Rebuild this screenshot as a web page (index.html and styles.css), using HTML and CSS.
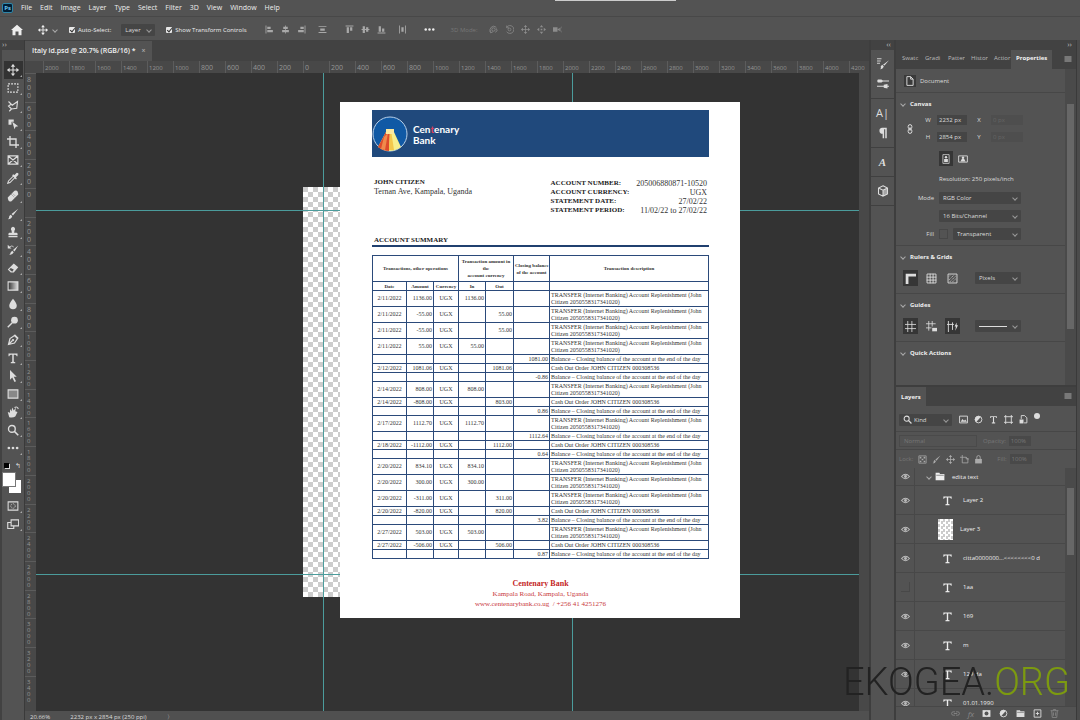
FILE: index.html
```html
<!DOCTYPE html>
<html lang="en">
<head>
  <meta charset="UTF-8" />
  <meta name="viewport" content="width=device-width, initial-scale=1.0"/>
  <title>Italy id.psd</title>
  <link rel="stylesheet" href="styles.css">
</head>

<body>
  <!-- Shared icons -->
  <svg class="sprite" xmlns="http://www.w3.org/2000/svg">
    <symbol id="i-move" viewBox="0 0 16 16"><path d="M8 1v14M1 8h14" fill="none" stroke="currentColor" stroke-width="1.4"/><path d="M8 0l3 3.5H5zM8 16l3-3.5H5zM0 8l3.5-3v6zM16 8l-3.5-3v6z" fill="currentColor"/></symbol>
    <symbol id="i-marquee" viewBox="0 0 16 16"><path d="M1.500 2.500h13v11h-13z" fill="none" stroke="currentColor" stroke-width="1.500" stroke-dasharray="2.500 1.500"/></symbol>
    <symbol id="i-lasso" viewBox="0 0 16 16"><path d="M2 2l5 5 7-5-1 9-7 1-4-4 3-2M6 12l-3 3" fill="none" stroke="currentColor" stroke-width="1.500"/></symbol>
    <symbol id="i-object" viewBox="0 0 16 16"><path d="M2 2h7v3H6v4H2z" fill="currentColor"/><path d="M7 5l8 6-3.500.5L10 15z" fill="currentColor"/></symbol>
    <symbol id="i-crop" viewBox="0 0 16 16"><path d="M4 0v12h12M0 4h12v12" fill="none" stroke="currentColor" stroke-width="1.800"/></symbol>
    <symbol id="i-frame" viewBox="0 0 16 16"><path d="M1.500 2.500h13v11h-13zM2 3l12 10M14 3L2 13" fill="none" stroke="currentColor" stroke-width="1.500"/></symbol>
    <symbol id="i-dropper" viewBox="0 0 16 16"><path d="M9 5l2 2-7 7-3 1 1-3z" fill="none" stroke="currentColor" stroke-width="1.400"/><path d="M8 3l2 1 3-3q3 0 2 3l-3 3 1 2-1 1-5-5z" fill="currentColor"/></symbol>
    <symbol id="i-heal" viewBox="0 0 16 16"><path d="M10 1q3-1 4 1t1 4l-9 9q-3 1-4-1t-1-4z" fill="currentColor"/><path d="M6 6l4 4M8 5l3 3" stroke="#535353" stroke-dasharray="1 1"/></symbol>
    <symbol id="i-brush" viewBox="0 0 16 16"><path d="M15 1L8 10 6 8zM5 9l2 2q-1 4-6 4 2-1 2-4 1-2 2-2z" fill="currentColor"/></symbol>
    <symbol id="i-stamp" viewBox="0 0 16 16"><path d="M8 1a3 3 0 0 1 2 5l-.5 3H13q2 1 1 3H2q-1-2 1-3h3.500L6 6a3 3 0 0 1 2-5zM2 13h12v2H2z" fill="currentColor"/></symbol>
    <symbol id="i-history" viewBox="0 0 16 16"><path d="M15 2l-5 8-2-2zM7 9l2 2q-2 4-6 3 2-1 2-3zM1 1v5h5z" fill="currentColor"/><path d="M3 4q4-3 6 0" fill="none" stroke="currentColor"/></symbol>
    <symbol id="i-eraser" viewBox="0 0 16 16"><path d="M9 2l6 5-6 7H5l-4-4z" fill="currentColor"/><path d="M3 10l4 3 2-3-4-2z" fill="#535353"/></symbol>
    <linearGradient id="fade"><stop stop-color="#333"/><stop offset="1" stop-color="#ddd"/></linearGradient>
    <symbol id="i-gradient" viewBox="0 0 16 16"><path d="M1.500 2.500h13v11h-13z" fill="url(#fade)" stroke="currentColor" stroke-width="1.500"/></symbol>
    <symbol id="i-blur" viewBox="0 0 16 16"><path d="M8 1q5 6 5 9a5 5 0 0 1-10 0q0-3 5-9z" fill="currentColor"/></symbol>
    <symbol id="i-dodge" viewBox="0 0 16 16"><circle cx="10" cy="5.500" r="4.500" fill="currentColor"/><path d="M7 9l-6 6" stroke="currentColor" stroke-width="2"/></symbol>
    <symbol id="i-pen" viewBox="0 0 16 16"><path d="M2 14l2-8 6-4 4 4-4 6zM2 14l5-5M10 1l5 5" fill="none" stroke="currentColor" stroke-width="1.600"/><circle cx="8" cy="8" r="1.500" fill="currentColor"/></symbol>
    <symbol id="i-type" viewBox="0 0 16 16"><path d="M2 2h12v3.500h-1Q12.500 3.500 11 3.500H9V13l2 .5V15H5v-1.500L7 13V3.500H5Q3.500 3.500 3 5.500H2z" fill="currentColor"/></symbol>
    <symbol id="i-arrow" viewBox="0 0 16 16"><path d="M4 0l9 9H9l3 6-2 1-3-6-3 3z" fill="currentColor"/></symbol>
    <symbol id="i-rect" viewBox="0 0 16 16"><path d="M1.500 2.500h13v11h-13z" fill="#888" stroke="currentColor" stroke-width="1.500"/></symbol>
    <symbol id="i-hand" viewBox="0 0 16 16"><path d="M3 15L1 8l3 1V4l2 3 1-5 2 4 3-4-1 5 3 1-3 6q-3 2-8 1z" fill="currentColor"/><path d="M10 2q4-2 5 2" fill="none" stroke="currentColor" stroke-width="1.400"/></symbol>
    <symbol id="i-search" viewBox="0 0 16 16"><circle cx="6.500" cy="6.500" r="4.500" fill="none" stroke="currentColor" stroke-width="1.800"/><path d="M10 10l5 5" stroke="currentColor" stroke-width="2.200"/></symbol>
    <symbol id="i-dots" viewBox="0 0 16 16"><circle cx="2.500" cy="8" r="1.800" fill="currentColor"/><circle cx="8" cy="8" r="1.800" fill="currentColor"/><circle cx="13.500" cy="8" r="1.800" fill="currentColor"/></symbol>
    <symbol id="i-mask" viewBox="0 0 16 16"><path d="M1.500 2.500h13v11h-13z" fill="none" stroke="currentColor" stroke-width="1.400"/><circle cx="8" cy="8" r="3" fill="none" stroke="currentColor" stroke-dasharray="1.500 1"/></symbol>
    <symbol id="i-screen" viewBox="0 0 16 16"><path d="M5.500 2.500h10v8h-10zM5 6H1v8h8v-3" fill="none" stroke="currentColor" stroke-width="1.500"/></symbol>
    <symbol id="i-home" viewBox="0 0 16 16"><path d="M8 1l8 7h-2v7h-4v-5H6v5H2V8H0z" fill="currentColor"/></symbol>
    <symbol id="i-al" viewBox="0 0 16 16"><path d="M1 1h1.500v14H1zM4 3h6v4H4zM4 9h10v4H4z" fill="currentColor"/></symbol>
    <symbol id="i-ac" viewBox="0 0 16 16"><path d="M7.300 1h1.400v14H7.300zM4 3h8v4H4zM2 9h12v4H2z" fill="currentColor"/></symbol>
    <symbol id="i-ar" viewBox="0 0 16 16"><path d="M13.500 1H15v14h-1.500zM6 3h6v4H6zM2 9h10v4H2z" fill="currentColor"/></symbol>
    <symbol id="i-dist" viewBox="0 0 16 16"><path d="M1 2h14v1.500H1zM1 12.500h14V14H1zM4 6h8v4H4z" fill="currentColor"/></symbol>
    <symbol id="i-orbit" viewBox="0 0 16 16"><circle cx="8" cy="8" r="3" fill="none" stroke="currentColor" stroke-width="1.400"/><path d="M3 12Q0 8 4 4t9 0M13 6q4 5-2 7M1 10l2 4 4-2" fill="none" stroke="currentColor" stroke-width="1.400"/></symbol>
    <symbol id="i-roll" viewBox="0 0 16 16"><circle cx="8" cy="8" r="2.500" fill="none" stroke="currentColor" stroke-width="1.300"/><path d="M3 4a7 7 0 1 1 0 8M3 1v4h4" fill="none" stroke="currentColor" stroke-width="1.400"/></symbol>
    <symbol id="i-slide" viewBox="0 0 16 16"><path d="M8 0l3 4H5zM8 16l3-4H5zM0 8l4-3v6zM16 8l-4-3v6zM6.500 6.500h3v3h-3z" fill="currentColor"/></symbol>
    <symbol id="i-camera" viewBox="0 0 16 16"><path d="M0 4h8v8H0zM8 8l4-3v6z" fill="currentColor"/><path d="M15 3l-2 5 2 5" fill="none" stroke="currentColor"/></symbol>
    <symbol id="i-menu" viewBox="0 0 16 16"><path d="M1 4h14M1 8h14M1 12h14" stroke="currentColor" stroke-width="1.800"/></symbol>
    <symbol id="i-brushset" viewBox="0 0 16 16"><path d="M0 1h6M0 4h5M0 7h4" stroke="currentColor" stroke-width="1.200"/><path d="M16 3l-6 7-2-1zM7 9l2 2q-1 4-5 4 2-1 1-4z" fill="currentColor"/></symbol>
    <symbol id="i-sliders" viewBox="0 0 16 16"><path d="M0 4h16M0 11h16" stroke="currentColor" stroke-width="1.500"/><path d="M1 2h5l2 2-2 2H1zM14 8v6l-5-1v-4z" fill="currentColor"/></symbol>
    <symbol id="i-para" viewBox="0 0 16 16"><path d="M13 1v14h-2V3H9.500v12h-2V9A4 4 0 0 1 7 1z" fill="currentColor"/></symbol>
    <symbol id="i-cube" viewBox="0 0 16 16"><path d="M8 1l6 3v8l-6 3-6-3V4zM2 4l6 3 6-3M8 7v8" fill="none" stroke="currentColor" stroke-width="1.400"/><path d="M8 7l6-3v8l-6 3z" fill="currentColor" opacity=".6"/></symbol>
    <symbol id="i-page" viewBox="0 0 16 16"><path d="M3 1h6l4 4v10H3zM9 1v4h4" fill="none" stroke="currentColor" stroke-width="1.500"/></symbol>
    <symbol id="i-link" viewBox="0 0 16 16"><rect x="5" y="1" width="6" height="7" rx="3" fill="none" stroke="currentColor" stroke-width="1.600"/><rect x="5" y="8" width="6" height="7" rx="3" fill="none" stroke="currentColor" stroke-width="1.600"/><path d="M8 5v6" stroke="currentColor" stroke-width="1.400"/></symbol>
    <symbol id="i-portrait" viewBox="0 0 16 16"><path d="M3 1h10v14H3z" fill="none" stroke="currentColor" stroke-width="1.200"/><circle cx="8" cy="5" r="2" fill="currentColor"/><path d="M5 8h6v5H5z" fill="currentColor"/></symbol>
    <symbol id="i-landscape" viewBox="0 0 16 16"><path d="M1 3h14v10H1z" fill="none" stroke="currentColor" stroke-width="1.400"/><circle cx="8" cy="6" r="2" fill="currentColor"/><path d="M4 12l2-4h4l2 4z" fill="currentColor"/></symbol>
    <symbol id="i-ruler" viewBox="0 0 16 16"><path d="M1 1h15v4H5v11H1z" fill="currentColor"/></symbol>
    <symbol id="i-grid" viewBox="0 0 16 16"><path d="M1.500 1.500h13v13h-13zM6 1v14M10.300 1v14M1 6h14M1 10.300h14" fill="none" stroke="currentColor" stroke-width="1.300"/></symbol>
    <symbol id="i-pixgrid" viewBox="0 0 16 16"><path d="M1.500 1.500h13v13h-13z" fill="none" stroke="currentColor" stroke-width="1.300"/><path d="M3 10l7-7M4 13l9-9M8 13l5-5M3 5l2-2" stroke="currentColor" stroke-dasharray="2 1"/></symbol>
    <symbol id="i-guides" viewBox="0 0 16 16"><path d="M4 0v16M10 0v16M0 5h16M0 11h16" stroke="currentColor" stroke-width="1.200"/></symbol>
    <symbol id="i-guidelock" viewBox="0 0 16 16"><path d="M4 0v14M9 0v8M0 4h14M0 10h8" stroke="currentColor" stroke-width="1.200"/><path d="M9 10h7v5H9z" fill="currentColor"/></symbol>
    <symbol id="i-smart" viewBox="0 0 16 16"><path d="M2 0v16M0 5h10M8 2v11" stroke="currentColor" stroke-width="1.300"/><path d="M14 2l-3 6h2l-1 6 4-8h-2z" fill="currentColor"/></symbol>
    <symbol id="i-image" viewBox="0 0 16 16"><path d="M1 2h14v12H1z" fill="none" stroke="currentColor" stroke-width="1.600"/><path d="M3 12l3-5 3 3 2-2 3 4z" fill="currentColor"/></symbol>
    <symbol id="i-adjust" viewBox="0 0 16 16"><circle cx="8" cy="8" r="6" fill="none" stroke="currentColor" stroke-width="1.600"/><path d="M12 3.500A6 6 0 1 0 4 12.500z" fill="currentColor"/></symbol>
    <symbol id="i-shape" viewBox="0 0 16 16"><path d="M3 0v16M13 0v16M0 3h16M0 13h16" stroke="currentColor" stroke-width="1.600"/></symbol>
    <symbol id="i-smartobj" viewBox="0 0 16 16"><path d="M4 7V1h6l4 4v9H9" fill="none" stroke="currentColor" stroke-width="1.600"/><path d="M1 8h7v7H1z" fill="currentColor"/></symbol>
    <symbol id="i-checker" viewBox="0 0 16 16"><path d="M1.500 1.500h13v13h-13z" fill="none" stroke="currentColor" stroke-width="1.300"/><path d="M3 3h3v3H3zM10 3h3v3h-3zM6.500 6.500h3v3h-3zM3 10h3v3H3zM10 10h3v3h-3z" fill="currentColor"/></symbol>
    <symbol id="i-artboard" viewBox="0 0 16 16"><path d="M4 0v14h10V7l-3-3H0M11 4v3h5" fill="none" stroke="currentColor" stroke-width="1.400"/></symbol>
    <symbol id="i-lock" viewBox="0 0 16 16"><path d="M2 7h12v8H2z" fill="currentColor"/><path d="M5 7V4q0-3 3-3t3 3v3" fill="none" stroke="currentColor" stroke-width="1.600"/></symbol>
    <symbol id="i-eye" viewBox="0 0 16 16"><path d="M1 8q7-8 14 0-7 8-14 0z" fill="none" stroke="currentColor" stroke-width="1.800"/><circle cx="8" cy="8" r="2.600" fill="currentColor"/></symbol>
    <symbol id="i-folder" viewBox="0 0 16 16"><path d="M1 2h6l1 2h7v10H1z" fill="currentColor"/><path d="M2 6h12" stroke="#535353"/></symbol>
    <symbol id="i-chain" viewBox="0 0 16 16"><path d="M7 5H4a3 3 0 0 0 0 6h3M9 5h3a3 3 0 0 1 0 6H9M5 8h6" fill="none" stroke="currentColor" stroke-width="1.500"/></symbol>
    <symbol id="i-addmask" viewBox="0 0 16 16"><path d="M1 2h14v12H1z" fill="currentColor"/><circle cx="8" cy="8" r="3.500" fill="#535353"/></symbol>
    <symbol id="i-new" viewBox="0 0 16 16"><path d="M2 1.500h12v13H2zM8 5v6M5 8h6" fill="none" stroke="currentColor" stroke-width="1.600"/></symbol>
    <symbol id="i-trash" viewBox="0 0 16 16"><path d="M1 3h14M6 3V1h4v2M3 3l1 12h8l1-12M6 6v6M10 6v6" fill="none" stroke="currentColor" stroke-width="1.500"/></symbol>
  </svg>

  <header class="menubar">
    <span class="app-logo">Ps</span>
    <nav>
      <a href="#">File</a><a href="#">Edit</a><a href="#">Image</a><a href="#">Layer</a><a href="#">Type</a><a href="#">Select</a><a href="#">Filter</a><a href="#">3D</a><a href="#">View</a><a href="#">Window</a><a href="#">Help</a>
    </nav>
    <span class="drag-bar"></span>
  </header>

  <div class="options">
    <button class="home" aria-label="Home"><svg><use href="#i-home"/></svg></button>
    <button class="current" aria-label="Move tool"><svg><use href="#i-move"/></svg><i class="chev"></i></button>
    <label><input type="checkbox" checked> Auto-Select:</label>
    <span class="select layer-select"><select aria-label="Auto-select target"><option>Layer</option></select></span>
    <label><input type="checkbox" checked> Show Transform Controls</label>
    <div class="align">
      <button aria-label="Align left"><svg><use href="#i-al"/></svg></button>
      <button aria-label="Align centre"><svg><use href="#i-ac"/></svg></button>
      <button aria-label="Align right"><svg><use href="#i-ar"/></svg></button>
    </div>
    <button aria-label="Distribute"><svg><use href="#i-dist"/></svg></button>
    <div class="align turned">
      <button aria-label="Align top"><svg><use href="#i-al"/></svg></button>
      <button aria-label="Align middle"><svg><use href="#i-ac"/></svg></button>
      <button aria-label="Align bottom"><svg><use href="#i-ar"/></svg></button>
    </div>
    <button class="turned" aria-label="Distribute across"><svg><use href="#i-dist"/></svg></button>
    <button class="more" aria-label="More"><svg><use href="#i-dots"/></svg></button>
    <div class="mode3d">
      <span>3D Mode:</span>
      <svg><use href="#i-orbit"/></svg><svg><use href="#i-roll"/></svg><svg><use href="#i-move"/></svg><svg><use href="#i-slide"/></svg><svg><use href="#i-camera"/></svg>
    </div>
  </div>

  <div class="workspace">
    <aside class="toolbar">
      <div class="collapse">››</div>
      <div class="tools" id="tools"></div>
      <div class="swap"><i class="mini"></i><span>↰</span></div>
      <div class="swatches"><i class="back"></i><i class="front"></i></div>
      <div class="tools modes">
        <button aria-label="Quick mask"><svg><use href="#i-mask"/></svg></button>
        <button aria-label="Screen mode"><svg><use href="#i-screen"/></svg></button>
      </div>
    </aside>

    <main class="document">
      <div class="tabs"><button class="tab">Italy id.psd @ 20.7% (RGB/16) * <span>×</span></button></div>
      <div class="ruler-top" id="rulerTop"></div>
      <div class="stage">
        <div class="ruler-left" id="rulerLeft"></div>
        <div class="canvas">
          <div class="transparent"></div>
          <i class="guide v g1"></i><i class="guide v g2"></i>
          <i class="guide h g3"></i><i class="guide h g4"></i>

          <article class="paper">
            <div class="banner">
              <svg viewBox="0 0 36 36">
                <circle cx="18" cy="18" r="17" fill="#1059a5" stroke="#b9d0e8" stroke-width="1"/>
                <path d="M15 14h6l8 17q-11 8-23 0z" fill="#f7ee8c"/>
                <path d="M15 14h3l-1 21q-6 0-11-4z" fill="#dd4b2b"/>
                <path d="M12 21l-3 12 4 1 3-17z" fill="#f08a4c"/>
                <path d="M18 14h1l3 20h-5z" fill="#f3c84c"/>
                <path d="M14 13h8v5h-8z" fill="#fbe9a0"/>
              </svg>
              <div class="bank">Cen<em>t</em>enary<br>Bank</div>
            </div>

            <div class="parties">
              <div>
                <strong>JOHN CITIZEN</strong>
                <p>Ternan Ave, Kampala, Uganda</p>
              </div>
              <dl>
                <dt>ACCOUNT NUMBER:</dt><dd>205006880871-10520</dd>
                <dt>ACCOUNT CURRENCY:</dt><dd>UGX</dd>
                <dt>STATEMENT DATE:</dt><dd>27/02/22</dd>
                <dt>STATEMENT PERIOD:</dt><dd>11/02/22 to 27/02/22</dd>
              </dl>
            </div>

            <h2>ACCOUNT SUMMARY</h2>

            <table>
              <colgroup><col class="c-date"><col class="c-amount"><col class="c-cur"><col class="c-in"><col class="c-out"><col class="c-close"><col></colgroup>
              <thead>
                <tr class="head">
                  <th colspan="3">Transactions, other operations</th>
                  <th colspan="2">Transaction amount in<br>the<br>account currency</th>
                  <th>Closing balance<br>of the account</th>
                  <th>Transaction description</th>
                </tr>
                <tr><th>Date</th><th>Amount</th><th>Currency</th><th>In</th><th>Out</th><th></th><th></th></tr>
              </thead>
              <tbody id="rows"></tbody>
            </table>

            <footer>
              <strong>Centenary Bank</strong>
              <p>Kampala Road, Kampala, Uganda</p>
              <p>www.centenarybank.co.ug &nbsp;/ +256 41 4251276</p>
            </footer>
          </article>
        </div>
        <div class="v-scroll"></div>
      </div>
      <div class="status"><span>20.66%</span><span>2232 px x 2854 px (250 ppi)</span><span>〉</span></div>
    </main>

    <aside class="dock">
      <div class="collapse">‹‹</div>
      <div class="group"><svg><use href="#i-brushset"/></svg><svg><use href="#i-sliders"/></svg></div>
      <div class="group"><span class="glyph">A|</span><svg><use href="#i-para"/></svg></div>
      <div class="group"><em class="glyph">A</em></div>
      <div class="group"><svg><use href="#i-cube"/></svg></div>
    </aside>

    <aside class="panels">
      <div class="collapse">››</div>
      <section class="properties">
        <div class="panel-tabs">
          <button>Swatc</button><button>Gradi</button><button>Patter</button><button>Histor</button><button>Actior</button><button class="active">Properties</button>
          <svg><use href="#i-menu"/></svg>
        </div>
        <div class="panel-body">
          <div class="sections">
            <div class="doc-row"><svg><use href="#i-page"/></svg>Document</div>
            <div class="section">
              <h3><i class="chev"></i>Canvas</h3>
              <div class="size">
                <svg><use href="#i-link"/></svg>
                <label for="w">W</label><input id="w" value="2232 px"><label for="x">X</label><input id="x" value="0 px" disabled>
                <label for="h">H</label><input id="h" value="2854 px"><label for="y">Y</label><input id="y" value="0 px" disabled>
              </div>
              <div class="orient">
                <button class="on" aria-label="Portrait"><svg><use href="#i-portrait"/></svg></button>
                <button aria-label="Landscape"><svg><use href="#i-landscape"/></svg></button>
              </div>
              <p>Resolution: 250 pixels/inch</p>
              <div class="field"><label for="mode">Mode</label><span class="select"><select id="mode"><option>RGB Color</option></select></span></div>
              <div class="field"><label for="bits"></label><span class="select"><select id="bits" aria-label="Bit depth"><option>16 Bits/Channel</option></select></span></div>
              <div class="field"><label for="fill">Fill</label><i class="fill-box"></i><span class="select"><select id="fill"><option>Transparent</option></select></span></div>
            </div>
            <div class="section short">
              <h3><i class="chev"></i>Rulers &amp; Grids</h3>
              <div class="toggles">
                <button class="on" aria-label="Rulers"><svg><use href="#i-ruler"/></svg></button>
                <button aria-label="Grid"><svg><use href="#i-grid"/></svg></button>
                <button aria-label="Pixel grid"><svg><use href="#i-pixgrid"/></svg></button>
                <span class="select"><select aria-label="Units"><option>Pixels</option></select></span>
              </div>
            </div>
            <div class="section short">
              <h3><i class="chev"></i>Guides</h3>
              <div class="toggles">
                <button class="on" aria-label="Guides"><svg><use href="#i-guides"/></svg></button>
                <button aria-label="Lock guides"><svg><use href="#i-guidelock"/></svg></button>
                <button class="on" aria-label="Smart guides"><svg><use href="#i-smart"/></svg></button>
                <span class="select line"><select aria-label="Guide style"><option></option></select></span>
              </div>
            </div>
            <div class="section last"><h3><i class="chev"></i>Quick Actions</h3></div>
          </div>
          <div class="scroll"><i></i></div>
        </div>
      </section>

      <section class="layers">
        <div class="panel-tabs"><button class="active">Layers</button><svg><use href="#i-menu"/></svg></div>
        <div class="filter">
          <span class="select"><svg><use href="#i-search"/></svg><select aria-label="Filter kind"><option>Kind</option></select></span>
          <svg><use href="#i-image"/></svg><svg><use href="#i-adjust"/></svg><svg><use href="#i-type"/></svg><svg><use href="#i-shape"/></svg><svg><use href="#i-smartobj"/></svg><i class="knob"></i>
        </div>
        <div class="blend">
          <select aria-label="Blend mode" disabled><option>Normal</option></select>
          <label for="opacity">Opacity:</label><input id="opacity" value="100%" disabled>
        </div>
        <div class="locks">
          <span>Lock:</span>
          <svg><use href="#i-checker"/></svg><svg><use href="#i-brush"/></svg><svg><use href="#i-move"/></svg><svg><use href="#i-artboard"/></svg><svg><use href="#i-lock"/></svg>
          <label for="fillp">Fill:</label><input id="fillp" value="100%" disabled>
        </div>
        <div class="layer-body">
          <ul>
            <li class="folder"><span class="eye"><svg><use href="#i-eye"/></svg></span><i class="chev"></i><svg class="thumb"><use href="#i-folder"/></svg>edita text</li>
            <li><span class="eye"><svg><use href="#i-eye"/></svg></span><svg class="thumb"><use href="#i-type"/></svg>Layer 2</li>
            <li class="pic"><span class="eye"><svg><use href="#i-eye"/></svg></span><span class="thumb"></span>Layer 3</li>
            <li><span class="eye"><svg><use href="#i-eye"/></svg></span><svg class="thumb"><use href="#i-type"/></svg>citta0000000...&lt;&lt;&lt;&lt;&lt;&lt;&lt;&lt;0 d</li>
            <li><span class="eye off"></span><svg class="thumb"><use href="#i-type"/></svg>1aa</li>
            <li><span class="eye"><svg><use href="#i-eye"/></svg></span><svg class="thumb"><use href="#i-type"/></svg>169</li>
            <li><span class="eye"><svg><use href="#i-eye"/></svg></span><svg class="thumb"><use href="#i-type"/></svg>m</li>
            <li><span class="eye"><svg><use href="#i-eye"/></svg></span><svg class="thumb"><use href="#i-type"/></svg>129 da</li>
            <li><span class="eye"><svg><use href="#i-eye"/></svg></span><svg class="thumb"><use href="#i-type"/></svg>01.01.1990</li>
          </ul>
          <div class="scroll"><i></i></div>
        </div>
        <div class="layer-actions">
          <svg class="dim"><use href="#i-chain"/></svg><em class="dim">fx</em><svg><use href="#i-addmask"/></svg><svg><use href="#i-adjust"/></svg><svg><use href="#i-folder"/></svg><svg><use href="#i-new"/></svg><svg class="dim"><use href="#i-trash"/></svg>
        </div>
      </section>
    </aside>
    <div class="edge"></div>
  </div>

  <div class="watermark">EKOGEA.<span>ORG</span></div>

  <script>
    // Toolbar
    const tools = ['move', 'marquee', 'lasso', 'object', 'crop', 'frame', 'dropper', 'heal', 'brush', 'stamp', 'history',
      'eraser', 'gradient', 'blur', 'dodge', 'pen', 'type', 'arrow', 'rect', 'hand', 'search', 'dots'];
    document.getElementById('tools').innerHTML = tools.map((t, i) =>
      `<button class="${i === 0 ? 'active' : ''}" aria-label="${t}"><svg><use href="#i-${t}"/></svg></button>`).join('');

    // Rulers, one label every 200 px of the file
    let across = '', down = '';
    const size = n => Math.abs(n) < 1000 ? 'big' : '';
    for (let n = -2000; n <= 4200; n += 200) across += `<span class="${size(n)}">${Math.abs(n)}</span>`;
    for (let n = -800; n <= 3400; n += 200) down += `<span class="${size(n)}">${String(Math.abs(n)).split('').join('<br>')}</span>`;
    document.getElementById('rulerTop').innerHTML = across;
    document.getElementById('rulerLeft').innerHTML = down;

    // Table rows: date, amount, in, out, closing balance, kind
    const text = {
      t: 'TRANSFER (Internet Banking) Account Replenishment (John<br>Citizen 2050558317341020)',
      b: 'Balance – Closing balance of the account at the end of the day',
      c: 'Cash Out Order JOHN CITIZEN 000308536'
    };
    const rows = [
      ['2/11/2022', '1136.00', '1136.00', '', '', 't'],
      ['2/11/2022', '-55.00', '', '55.00', '', 't'],
      ['2/11/2022', '-55.00', '', '55.00', '', 't'],
      ['2/11/2022', '55.00', '55.00', '', '', 't'],
      ['', '', '', '', '1081.00', 'b'],
      ['2/12/2022', '1081.06', '', '1081.06', '', 'c'],
      ['', '', '', '', '-0.86', 'b'],
      ['2/14/2022', '808.00', '808.00', '', '', 't'],
      ['2/14/2022', '-808.00', '', '803.00', '', 'c'],
      ['', '', '', '', '0.86', 'b'],
      ['2/17/2022', '1112.70', '1112.70', '', '', 't'],
      ['', '', '', '', '1112.64', 'b'],
      ['2/18/2022', '-1112.00', '', '1112.00', '', 'c'],
      ['', '', '', '', '0.64', 'b'],
      ['2/20/2022', '834.10', '834.10', '', '', 't'],
      ['2/20/2022', '300.00', '300.00', '', '', 't'],
      ['2/20/2022', '-311.00', '', '311.00', '', 't'],
      ['2/20/2022', '-820.00', '', '820.00', '', 'c'],
      ['', '', '', '', '3.82', 'b'],
      ['2/27/2022', '503.00', '503.00', '', '', 't'],
      ['2/27/2022', '-506.00', '', '506.00', '', 'c'],
      ['', '', '', '', '0.87', 'b']
    ];
    document.getElementById('rows').innerHTML = rows.map(r =>
      `<tr class="${r[5] === 't' ? 'tall' : ''}"><td class="mid">${r[0]}</td><td>${r[1]}</td><td class="mid">${r[0] ? 'UGX' : ''}</td>` +
      `<td>${r[2]}</td><td>${r[3]}</td><td>${r[4]}</td><td class="desc">${text[r[5]]}</td></tr>`).join('');
  </script>
</body>
</html>
```
FILE: styles.css
```css
* {
  box-sizing: border-box;
}

body {
  margin: 0;
  height: 100vh;
  display: flex;
  flex-direction: column;
  overflow: hidden;
  background-color: #424242;
  color: #ddd;
  font-family: "Open Sans", "Noto Sans", sans-serif;
  font-size: 6px;
  line-height: 10px;
}

button, input, select {
  font: inherit;
  color: inherit;
  background: none;
  border: none;
  padding: 0;
  margin: 0;
  min-width: 0;
  appearance: none;
}

button {
  display: flex;
  align-items: center;
  justify-content: center;
}

svg {
  width: 10px;
  height: 10px;
  display: block;
  flex: none;
}

p, h2, h3, dl, dd, ul {
  margin: 0;
  padding: 0;
}

.sprite {
  position: absolute;
  width: 0;
  height: 0;
}

/* Menu bar */
.menubar {
  flex: 0 0 17px;
  display: flex;
  align-items: center;
  padding-left: 2px;
  background-color: #535353;
  border-bottom: 1px solid #484848;
  font-size: 7px;
}

.app-logo {
  width: 11px;
  height: 10px;
  border: 1px solid #2f86a8;
  border-radius: 2px;
  background-color: #001e36;
  color: #6fc6f0;
  font-size: 6px;
  font-weight: bold;
  line-height: 8px;
  text-align: center;
}

.menubar nav {
  display: flex;
  gap: 8px;
  padding-left: 8px;
}

.menubar a {
  color: #eee;
  text-decoration: none;
}

.drag-bar {
  position: absolute;
  top: 0;
  left: 555px;
  width: 121px;
  height: 1px;
  background-color: #ccc;
}

/* Options bar */
.options {
  flex: 0 0 23px;
  display: flex;
  align-items: center;
  padding: 2px 0 0 11px;
  background-color: #535353;
}

.options svg {
  width: 9px;
  height: 9px;
}

.options > button,
.align {
  color: #a8a8a8;
}

.options .home {
  color: #eee;
  margin-right: 15px;
}

.options .home svg {
  width: 12px;
  height: 12px;
}

.options .current {
  color: #eee;
  gap: 5px;
  margin-right: 12px;
}

.options .current svg {
  width: 10px;
  height: 10px;
}

.options label {
  display: flex;
  align-items: center;
  gap: 3px;
  color: #eee;
}

.options input {
  width: 6px;
  height: 6px;
  border-radius: 1px;
  background-color: #e8e8e8;
  display: flex;
  align-items: center;
  justify-content: center;
}

.options input::after {
  content: "";
  width: 2px;
  height: 4px;
  border: solid #333;
  border-width: 0 1px 1px 0;
  transform: rotate(40deg);
}

.layer-select {
  width: 34px;
  margin: 0 11px 0 10px;
}

.align {
  display: flex;
  gap: 7px;
  margin: 0 12px 0 18px;
}

.turned svg {
  transform: rotate(90deg);
}

.options .more {
  color: #eee;
  margin: 0 16px 0 17px;
}

.options .more svg {
  width: 11px;
  height: 11px;
}

.mode3d {
  display: flex;
  align-items: center;
  gap: 7px;
  color: #8c8c8c;
}

.mode3d span {
  color: #777;
  margin-right: 4px;
}

/* Drop-downs */
.chev {
  width: 4px;
  height: 4px;
  border: solid #aaa;
  border-width: 0 1px 1px 0;
  transform: rotate(45deg);
  flex: none;
}

.select {
  display: flex;
  align-items: center;
  height: 12px;
  padding: 0 4px;
  background-color: #454545;
  border-radius: 1px;
}

.select select {
  flex: 1;
}

.select::after {
  content: "";
  width: 3px;
  height: 3px;
  border: solid #999;
  border-width: 0 1px 1px 0;
  transform: rotate(45deg);
}

/* Workspace */
.workspace {
  flex: 1;
  display: flex;
  min-height: 0;
}

.collapse {
  height: 10px;
  line-height: 8px;
  font-size: 8px;
  background-color: #424242;
  color: #bbb;
}

.toolbar {
  flex: 0 0 24px;
  display: flex;
  flex-direction: column;
  background-color: #535353;
  border-left: 2px solid #424242;
  color: #ddd;
}

.toolbar .collapse {
  margin-bottom: 11px;
}

.tools {
  display: flex;
  flex-direction: column;
  align-items: center;
}

.tools button {
  width: 19px;
  height: 18px;
  position: relative;
}

.tools button.active {
  background-color: #333;
}

.tools button::after {
  content: "";
  position: absolute;
  right: 1px;
  bottom: 2px;
  border: 1px solid transparent;
  border-right-color: #aaa;
  border-bottom-color: #aaa;
}

.tools svg {
  width: 12px;
  height: 12px;
}

.swap {
  display: flex;
  justify-content: space-between;
  align-items: center;
  height: 15px;
  padding: 2px 3px 0 2px;
  font-size: 7px;
}

.mini {
  width: 5px;
  height: 5px;
  background-color: #000;
  box-shadow: 1px 1px 0 #ddd;
}

.swatches {
  position: relative;
  height: 25px;
}

.swatches i {
  position: absolute;
  width: 12px;
  height: 13px;
  background-color: #fff;
}

.swatches .front {
  left: 1px;
  top: 1px;
  box-shadow: 0 0 0 1px #777;
}

.swatches .back {
  left: 7px;
  top: 8px;
}

/* Document window */
.document {
  flex: 1;
  min-width: 0;
  display: flex;
  flex-direction: column;
  border-left: 1px solid #3a3a3a;
}

.tabs {
  flex: 0 0 21px;
  display: flex;
  padding-top: 1px;
  background-color: #424242;
}

.tab {
  padding: 0 6px 0 7px;
  gap: 6px;
  background-color: #535353;
  color: #f2f2f2;
  font-size: 7px;
  font-weight: 600;
}

.tab span {
  color: #aaa;
}

.ruler-top {
  flex: 0 0 12px;
  display: flex;
  overflow: hidden;
  padding-left: 18px;
  background-color: #484848;
  color: #969696;
  line-height: 14px;
}

.ruler-top span {
  flex: 0 0 26px;
  border-left: 1px solid #5c5c5c;
  padding-left: 1px;
}

.ruler-top .big {
  font-size: 7px;
}

.stage {
  flex: 1;
  min-height: 0;
  display: flex;
}

.ruler-left {
  flex: 0 0 11px;
  overflow: hidden;
  display: flex;
  flex-direction: column;
  background-color: #484848;
  color: #969696;
  line-height: 6px;
}

.ruler-left span {
  flex: 0 0 4.5%;
  padding: 2px 0 0 2px;
  border-top: 1px solid #5c5c5c;
}

.ruler-left .big {
  font-size: 7px;
  line-height: 8px;
}

.v-scroll {
  flex: 0 0 10px;
  background-color: #484848;
}

.status {
  flex: 0 0 9px;
  display: flex;
  gap: 20px;
  padding-left: 5px;
  background-color: #505050;
  line-height: 12px;
  overflow: hidden;
}

.canvas {
  flex: 1;
  position: relative;
  overflow: hidden;
  background-color: #333;
}

.transparent {
  position: absolute;
  left: 267px;
  top: 114px;
  width: 306px;
  height: 410px;
  background: repeating-conic-gradient(#fff 0 25%, #ccc 0 50%) 0 0 / 10px 10px;
}

.guide {
  position: absolute;
  background-color: #4b9c9c;
}

.guide.v {
  width: 1px;
  top: 0;
  bottom: 0;
}

.guide.h {
  height: 1px;
  left: 0;
  right: 0;
}

.g1 {
  left: 287px;
}

.g2 {
  left: 536px;
}

.g3 {
  top: 137px;
}

.g4 {
  top: 501px;
}

/* Statement */
.paper {
  position: absolute;
  left: 304px;
  top: 29px;
  width: 400px;
  height: 516px;
  padding: 8px 31px 0 32px;
  background-color: #fff;
  color: #333;
  font-family: "Liberation Serif", serif;
  font-size: 8px;
}

.paper strong,
.paper h2 {
  font-size: 7px;
  display: block;
  color: #222;
}

.banner {
  display: flex;
  align-items: center;
  gap: 5px;
  height: 47px;
  background-color: #20497c;
}

.banner svg {
  width: 36px;
  height: 36px;
}

.bank {
  color: #fff;
  font-family: Lato, sans-serif;
  font-size: 10px;
  font-weight: bold;
  line-height: 11px;
  padding-top: 3px;
}

.bank em {
  color: #e0405a;
  font-style: normal;
}

.parties {
  display: flex;
  justify-content: space-between;
  padding: 20px 2px 0;
}

.parties dl {
  display: grid;
  grid-template-columns: auto auto;
  column-gap: 7px;
  line-height: 9px;
  padding-top: 2px;
}

.parties dt {
  font-size: 7px;
  font-weight: bold;
  color: #222;
}

.parties dd {
  text-align: right;
}

.paper h2 {
  margin-top: 20px;
  padding-left: 2px;
  border-bottom: 2px solid #20406f;
}

.paper table {
  width: 100%;
  margin-top: 8px;
  table-layout: fixed;
  border-collapse: collapse;
  font-size: 6px;
  line-height: 7px;
}

.c-date {
  width: 34px;
}

.c-amount,
.c-in {
  width: 27px;
}

.c-cur {
  width: 25px;
}

.c-out {
  width: 28px;
}

.c-close {
  width: 36px;
}

.paper th,
.paper td {
  border: 1px solid #2b4a7a;
  padding: 0 1px;
  white-space: nowrap;
  text-align: right;
}

.paper th {
  font-size: 5px;
}

.paper tr {
  height: 9px;
}

.paper tr.head {
  height: 26px;
}

.paper tr.tall {
  height: 16px;
}

.paper th,
.paper td.mid {
  text-align: center;
}

.paper td.desc {
  text-align: left;
}

.paper footer {
  margin-top: 20px;
  text-align: center;
  color: #c8373b;
  font-size: 7px;
}

.paper footer strong {
  font-size: 8px;
  color: #c41f26;
}

/* Icon dock */
.dock {
  flex: 0 0 27px;
  border: solid #3e3e3e;
  border-width: 0 2px;
  background-color: #535353;
}

.dock .collapse {
  text-align: right;
  padding-right: 3px;
}

.group {
  display: flex;
  flex-direction: column;
  align-items: center;
  justify-content: center;
  gap: 8px;
  min-height: 28px;
  padding: 8px 0;
  border-bottom: 1px solid #404040;
}

.group svg {
  width: 12px;
  height: 12px;
}

.glyph {
  font-size: 11px;
  line-height: 12px;
}

em.glyph {
  font-family: "Liberation Serif", serif;
  font-weight: bold;
}

/* Panels */
.panels {
  flex: 0 0 180px;
  display: flex;
  flex-direction: column;
  min-height: 0;
}

.panels .collapse {
  text-align: right;
  padding-right: 4px;
}

.edge {
  flex: 0 0 4px;
  border-left: 1px solid #3a3a3a;
  background-color: #4b4b4b;
}

.panel-tabs {
  flex: 0 0 19px;
  display: flex;
  align-items: stretch;
  background-color: #424242;
  color: #bbb;
}

.panel-tabs button {
  flex: 0 0 23px;
  padding: 0 0 3px 6px;
  justify-content: flex-start;
  overflow: hidden;
}

.panel-tabs .active {
  flex: 0 0 auto;
  padding: 0 5px 3px;
  background-color: #535353;
  color: #f2f2f2;
  font-weight: bold;
}

.panel-tabs svg {
  width: 8px;
  height: 8px;
  margin: 5px 4px 0 auto;
}

.properties {
  flex: 0 0 337px;
  display: flex;
  flex-direction: column;
  border-bottom: 2px solid #3e3e3e;
}

.panel-body,
.layer-body {
  flex: 1;
  min-height: 0;
  display: flex;
  background-color: #535353;
}

.sections {
  flex: 1;
}

.doc-row {
  display: flex;
  align-items: center;
  gap: 4px;
  height: 24px;
  padding-left: 8px;
  border-bottom: 1px solid #474747;
}

.doc-row svg {
  width: 12px;
  height: 12px;
  padding: 1px;
  background-color: #3a3a3a;
}

.section {
  height: 153px;
  padding: 4px 0 0 5px;
  border-bottom: 1px solid #474747;
}

.section.short {
  height: 48px;
}

.section.last {
  height: auto;
  border: none;
}

.section h3 {
  display: flex;
  align-items: center;
  gap: 5px;
  height: 14px;
  color: #eee;
  font-size: 6px;
}

.size {
  display: grid;
  grid-template-columns: 18px 14px 30px 20px 32px;
  grid-auto-rows: 12px;
  gap: 5px 2px;
  align-items: center;
  text-align: center;
  margin-top: 3px;
}

.size svg {
  grid-row: span 2;
  margin-left: 4px;
}

.size input {
  height: 10px;
  padding-left: 2px;
  background-color: #454545;
}

.size input:disabled {
  color: #666;
  background-color: #4e4e4e;
}

.orient {
  display: flex;
  gap: 3px;
  padding: 8px 0 6px 38px;
}

.orient button {
  width: 14px;
  height: 15px;
}

.on {
  background-color: #363636;
}

.section p {
  padding: 2px 0 8px 38px;
}

.field {
  display: flex;
  align-items: center;
  margin-bottom: 6px;
}

.field label {
  width: 33px;
  margin-right: 5px;
  text-align: right;
}

.field .select {
  width: 82px;
}

.field .fill-box + .select {
  width: 68px;
}

.fill-box {
  width: 9px;
  height: 10px;
  margin-right: 5px;
  border: 1px solid #474747;
}

.toggles {
  display: flex;
  align-items: center;
  gap: 6px;
  padding: 6px 0 0 2px;
}

.toggles button {
  width: 15px;
  height: 16px;
}

.toggles svg {
  width: 11px;
  height: 11px;
}

.toggles .select {
  width: 46px;
  margin-left: 9px;
}

.toggles .line::before {
  content: "";
  flex: 0 0 28px;
  height: 1px;
  background-color: #ddd;
}

.scroll {
  flex: 0 0 11px;
  padding: 35px 2px 0;
  background-color: #4a4a4a;
}

.scroll i {
  display: block;
  height: 80%;
  background-color: #676767;
}

/* Layers */
.layers {
  flex: 1;
  min-height: 0;
  display: flex;
  flex-direction: column;
  background-color: #535353;
}

.layers .panel-tabs button {
  padding-bottom: 0;
}

.filter {
  flex: 0 0 26px;
  display: flex;
  align-items: center;
  gap: 6px;
  padding: 2px 0 0 3px;
  border-bottom: 1px solid #474747;
}

.filter .select {
  width: 53px;
  margin-right: 1px;
  gap: 2px;
}

.filter svg {
  width: 9px;
  height: 9px;
}

.knob {
  width: 6px;
  height: 6px;
  margin-bottom: 7px;
  border-radius: 3px;
  background-color: #ddd;
}

.blend,
.locks {
  flex: 0 0 18px;
  display: flex;
  align-items: center;
  padding-left: 3px;
  color: #777;
}

.blend {
  border-bottom: 1px solid #474747;
}

.blend select {
  width: 78px;
  margin-right: 6px;
  padding-left: 4px;
  border: 1px solid #4a4a4a;
  color: #777;
  opacity: 1;
}

.blend input,
.locks input {
  width: 22px;
  padding-left: 2px;
  margin-left: 3px;
  background-color: #494949;
}

.locks svg {
  width: 9px;
  height: 9px;
  margin-left: 5px;
  color: #aaa;
}

.locks label {
  margin-left: 14px;
}

.layer-body ul {
  flex: 1;
  min-width: 0;
  overflow: hidden;
  list-style: none;
}

.layer-body li {
  display: flex;
  align-items: center;
  height: 29px;
  border-bottom: 1px solid #484848;
  color: #eee;
  white-space: nowrap;
}

.layer-body li.folder {
  height: 18px;
}

.eye {
  display: flex;
  align-items: center;
  align-self: stretch;
  width: 19px;
  padding-left: 5px;
  border-right: 1px solid #484848;
  color: #bbb;
}

.eye svg {
  width: 9px;
  height: 9px;
}

.eye.off::before {
  content: "";
  width: 8px;
  height: 9px;
  border: solid #484848;
  border-width: 0 1px 1px 0;
}

.thumb {
  margin: 0 10px 0 27px;
}

svg.thumb {
  width: 11px;
  height: 11px;
}

.folder .chev {
  margin-left: 12px;
}

.folder svg.thumb {
  width: 10px;
  margin: 0 7px 0 4px;
}

.pic .thumb {
  width: 15px;
  height: 21px;
  margin: 0 7px 0 23px;
  background: repeating-conic-gradient(#fff 0 25%, #ccc 0 50%) 0 0 / 5px 5px;
}

.layer-body .scroll {
  padding-top: 20px;
}

.layer-body .scroll i {
  height: 67px;
}

.layer-actions {
  flex: 0 0 14px;
  display: flex;
  align-items: center;
  justify-content: flex-end;
  gap: 8px;
  padding-right: 17px;
  border-top: 1px solid #474747;
}

.layer-actions svg {
  width: 9px;
  height: 9px;
}

.layer-actions em {
  font-size: 8px;
}

.dim {
  color: #888;
}

.watermark {
  position: fixed;
  right: 10px;
  bottom: 15px;
  font-family: Roboto, "Open Sans", sans-serif;
  font-weight: 300;
  font-size: 38px;
  line-height: 46px;
  color: #222;
}

.watermark span {
  color: #7c9a10;
}
```
